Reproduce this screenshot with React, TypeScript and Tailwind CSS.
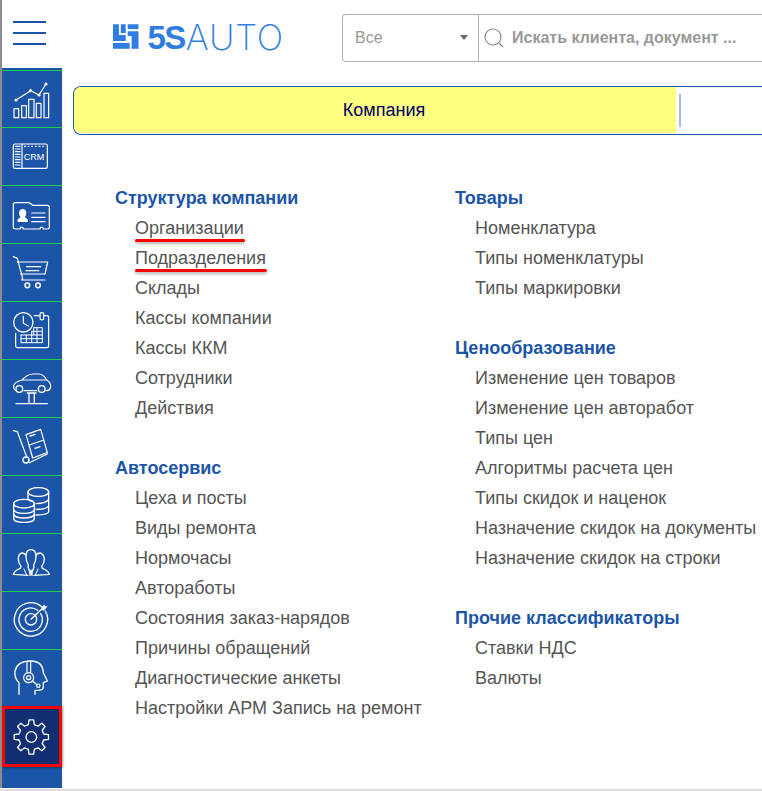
import React from "react";

function Ic({ top, h = 57, children }: { top: number; h?: number; children: React.ReactNode }) {
  return (
    <svg
      width={60}
      height={h}
      viewBox={`6 ${top + 3} 180 ${h * 3}`}
      fill="none"
      stroke="#fff"
      strokeWidth={3.6}
      strokeLinecap="round"
      strokeLinejoin="round"
    >
      {children}
    </svg>
  );
}

const icons: React.ReactNode[] = [
  <Ic key="chart" top={30} h={56}>
    <path d="M48 120 L92 92 L117 105 L138 72" />
    <circle cx="48" cy="120" r="3" fill="#fff" />
    <circle cx="92" cy="92" r="3" fill="#fff" />
    <circle cx="117" cy="105" r="3" fill="#fff" />
    <circle cx="138" cy="72" r="3" fill="#fff" />
    <rect x="42" y="146" width="14" height="27" />
    <rect x="65" y="137" width="14" height="36" />
    <rect x="86" y="118" width="16" height="55" />
    <rect x="109" y="130" width="14" height="43" />
    <rect x="132" y="100" width="14" height="73" />
  </Ic>,
  <Ic key="crm" top={201}>
    <rect x="40" y="252" width="102" height="73" rx="5" />
    <path d="M66 252 V325" />
    <path d="M46 259 H60 M46 267 H60 M46 275 H60 M46 283 H60 M46 291 H60 M46 299 H60 M46 307 H60 M46 315 H60" />
    <path d="M72 259 H138" strokeDasharray="5 6" strokeLinecap="butt" />
    <text x="71" y="299" fill="#fff" stroke="none" fontSize="27" fontFamily="'Liberation Sans', sans-serif">CRM</text>
  </Ic>,
  <Ic key="card" top={375}>
    <path d="M40 434 Q40 428 46 428 H88 L98 436 H142 Q148 436 148 442 V502 Q148 507 142 507 H130 L128 502 H122 L120 507 H70 L68 502 H62 L60 507 H46 Q40 507 40 502 Z" />
    <path d="M54 484 Q54 476 64 473 Q58 466 59 458 Q60 449 68 449 Q76 449 77 458 Q78 466 72 473 Q82 476 82 484 Z" fill="#fff" />
    <path d="M95 459 H135 M95 472 H135 M95 485 H135" />
  </Ic>,
  <Ic key="cart" top={549}>
    <path d="M40 590 L52 595 L68 655 L65 660 H135" />
    <path d="M52 606 H143 L135 642 H62" />
    <path d="M80 620 H122 M78 632 H116" />
    <circle cx="82" cy="676" r="7" strokeWidth="4.500" />
    <circle cx="114" cy="676" r="7" strokeWidth="4.500" />
  </Ic>,
  <Ic key="cal" top={3}>
    <path d="M103 47 H120 M132 47 H141 Q146 47 146 52 V138 Q146 143 141 143 H52 Q47 143 47 138 V100" />
    <rect x="120" y="38" width="11" height="22" rx="5" />
    <circle cx="70" cy="67" r="29" strokeWidth="4" />
    <path d="M70 48 V70 L85 78" />
    <path d="M63 105 H127 M63 128 H127 M63 128 V105 M127 128 V83 H103 M95 105 V128 M79 105 V128 M111 83 V128 M95 105 V96 M95 94 H127 M101 83 V105 M63 116 H127" strokeWidth="3" />
  </Ic>,
  <Ic key="lift" top={177}>
    <path d="M48 272 Q40 268 41 256 Q43 247 66 240 Q82 222 100 222 H118 Q132 224 140 240 Q153 248 152 260 Q151 272 138 272 M72 272 H110 M66 240 H140" />
    <circle cx="58" cy="267" r="10" strokeWidth="4" />
    <circle cx="125" cy="267" r="10" strokeWidth="4" />
    <path d="M82 279 H108 M87 279 V310 M103 279 V310" strokeWidth="4" />
    <path d="M48 311 H142" strokeWidth="4" />
  </Ic>,
  <Ic key="dolly" top={351}>
    <path d="M40 392 L52 395 L80 470" />
    <path d="M78 404 L122 388 L142 458 L98 474 Z M88 435 L132 420" />
    <path d="M90 408 L105 403 M105 445 L120 440" strokeWidth="4" />
    <path d="M88 488 L142 462" />
    <circle cx="78" cy="480" r="9" strokeWidth="4" />
  </Ic>,
  <Ic key="coins" top={525}>
    <ellipse cx="115" cy="576" rx="31" ry="13" strokeWidth="4" />
    <path d="M84 576 V598 M146 576 V635 Q146 644 108 645 M146 598 Q140 610 108 611 M84 598 Q90 604 100 604 M146 618 Q140 628 108 628" strokeWidth="4" />
    <ellipse cx="72" cy="611" rx="31" ry="13" strokeWidth="4" />
    <path d="M41 611 V655 Q42 667 72 667 Q102 667 103 655 V611 M41 628 Q44 640 72 640 Q100 640 103 628 M41 642 Q44 654 72 654 Q100 654 103 642" strokeWidth="4" />
  </Ic>,
  <Ic key="people" top={-24}>
    <path d="M93 26 Q78 26 78 46 Q78 60 85 72 L84 78 L93 103 L102 78 L101 72 Q108 60 108 46 Q108 26 93 26 Z" strokeWidth="4" />
    <path d="M78 42 Q72 36 66 36 Q55 38 55 54 Q55 66 63 76 L61 82 Q44 88 40 100 L84 103 M108 42 Q114 36 120 36 Q131 38 133 54 Q133 66 125 76 L127 82 Q144 88 148 100 L102 103" strokeWidth="4" />
    <path d="M72 84 L80 102 M114 84 L106 102 M89 103 L93 86 L97 103" strokeWidth="3" />
  </Ic>,
  <Ic key="target" top={150}>
    <path d="M125 197 A50 50 0 1 0 136 210" strokeWidth="4" />
    <path d="M113 208 A35 35 0 1 0 122 218" strokeWidth="4" />
    <circle cx="93" cy="235" r="17" strokeWidth="4" />
    <path d="M93 235 L128 202" strokeWidth="4" />
    <path d="M124 200 L133 192 L134 198 L141 196 L132 208 L127 206" fill="#fff" strokeWidth="2" />
  </Ic>,
  <Ic key="head" top={324}>
    <path d="M57 460 V425 Q42 410 45 390 Q52 360 92 360 Q128 360 130 395 L142 420 L130 425 V440 Q128 450 105 448 V460" strokeWidth="4" />
    <path d="M81 362 V395 M92 361 V395" />
    <circle cx="86" cy="410" r="15" />
    <circle cx="86" cy="410" r="6" />
    <path d="M97 420 L111 431" />
    <circle cx="115" cy="434" r="5" />
  </Ic>,
];

function gearPath(cx: number, cy: number, ro: number, ri: number, n: number) {
  const pts: string[] = [];
  const step = (Math.PI * 2) / n;
  for (let i = 0; i < n; i++) {
    const a = -Math.PI / 2 + i * step;
    const p = (r: number, d: number) => `${(cx + r * Math.cos(a + d)).toFixed(1)} ${(cy + r * Math.sin(a + d)).toFixed(1)}`;
    pts.push(`${i === 0 ? "M" : "L"}${p(ri, -step * 0.3)}`, `L${p(ro, -step * 0.17)}`, `L${p(ro, step * 0.17)}`, `L${p(ri, step * 0.3)}`);
  }
  return pts.join(" ") + " Z";
}

const Gear = () => (
  <svg width={54} height={54} viewBox="14 504 162 162" fill="none" stroke="#fff" strokeWidth={4} strokeLinejoin="round">
    <path d={gearPath(93, 588, 52, 38, 8)} />
    <circle cx="93" cy="588" r="16" />
  </svg>
);

const Logo = () => (
  <svg width="27" height="27" viewBox="0 0 27 27" fill="#2f7de1">
    <path d="M0 0 H6 V11 H13 V17 H0 Z" />
    <path d="M8 0 H13 V9 H8 Z" />
    <path d="M15 0 H26 V5 H15 Z" />
    <path d="M15 7 H26 V25 H19 V12 H15 Z" />
    <path d="M0 19 H17 V25 H0 Z" />
  </svg>
);

type Sec = { t: string; items: string[]; u?: string[] };

const col1: Sec[] = [
  {
    t: "Структура компании",
    items: ["Организации", "Подразделения", "Склады", "Кассы компании", "Кассы ККМ", "Сотрудники", "Действия"],
    u: ["Организации", "Подразделения"],
  },
  {
    t: "Автосервис",
    items: ["Цеха и посты", "Виды ремонта", "Нормочасы", "Автоработы", "Состояния заказ-нарядов", "Причины обращений", "Диагностические анкеты", "Настройки АРМ Запись на ремонт"],
  },
];
const col2: Sec[] = [
  { t: "Товары", items: ["Номенклатура", "Типы номенклатуры", "Типы маркировки"] },
  {
    t: "Ценообразование",
    items: ["Изменение цен товаров", "Изменение цен авторабот", "Типы цен", "Алгоритмы расчета цен", "Типы скидок и наценок", "Назначение скидок на документы", "Назначение скидок на строки"],
  },
  { t: "Прочие классификаторы", items: ["Ставки НДС", "Валюты"] },
];

function Column({ secs, className }: { secs: Sec[]; className: string }) {
  return (
    <div className={`flex flex-col gap-[30px] ${className}`}>
      {secs.map((s) => (
        <div key={s.t}>
          <div className="h-[30px] text-[18px] leading-[30px] font-bold whitespace-nowrap text-[#1c55a8]">{s.t}</div>
          {s.items.map((i) => (
            <div key={i} className="relative h-[30px] pl-5 text-[18px] leading-[30px] whitespace-nowrap text-[#555555]">
              <span className="relative inline-block">
                {i}
                {s.u?.includes(i) && (
                  <span className="absolute top-[26px] right-[-1px] left-0 h-[3px] rounded-sm bg-[#ff0000] shadow-[0_2px_3px_rgba(0,0,0,0.3)]" />
                )}
              </span>
            </div>
          ))}
        </div>
      ))}
    </div>
  );
}

export default function App() {
  return (
    <div className="flex h-[791px] w-[762px] overflow-hidden border-b-2 border-[#dddddd] bg-white font-['Liberation_Sans',Arial,sans-serif]">
      <div className="flex h-[788px] w-[62px] shrink-0 flex-col border-l-2 border-[#8c8c8c]">
        <div className="flex h-[68px] shrink-0 flex-col justify-center gap-[9px] pb-[2px] pl-[11px]">
          <div className="h-[2px] w-[33px] bg-[#1c55a8]" />
          <div className="h-[2px] w-[33px] bg-[#1c55a8]" />
          <div className="h-[2px] w-[33px] bg-[#1c55a8]" />
        </div>
        <div className="flex flex-1 flex-col bg-[#1c55a8] pt-[2px]">
          {icons.map((ic, i) => (
            <div key={i} className={`shrink-0 border-t border-[#1fd14a] ${i === 0 ? "h-[57px]" : "h-[58px]"}`}>
              {ic}
            </div>
          ))}
          <div className="mt-[-1px] h-[61px] shrink-0 border-[3px] border-[#ff0000] bg-[#112f72] shadow-[1px_1px_2px_rgba(0,0,0,0.4)]">
            <Gear />
          </div>
        </div>
      </div>
      <div className="min-w-0 flex-1">
        <div className="flex h-[75px] items-center">
          <div className="ml-[51px] flex h-[29px] w-[171px] shrink-0 items-center">
            <Logo />
            <span className="ml-[8px] text-[33px] leading-none font-bold tracking-[-1.5px] text-[#2f7de1]">5S</span>
            <span className="ml-[1px] font-['Inter',sans-serif] text-[35px] leading-none font-extralight tracking-[0.8px] text-[#2f7de1]">AUTO</span>
          </div>
          <div className="ml-[58px] flex h-[48px] w-[500px] shrink-0 rounded-l-[4px] border border-r-0 border-[#b3b3b3]">
            <div className="flex w-[136px] shrink-0 items-center justify-between border-r border-[#b3b3b3] pr-[10px] pl-[12px] text-[16px] text-[#999999]">
              <span>Все</span>
              <span className="h-0 w-0 border-x-[4px] border-t-[5px] border-x-transparent border-t-[#666666]" />
            </div>
            <div className="flex items-center pl-[4px]">
              <svg width="22" height="22" viewBox="0 0 22 22" fill="none" stroke="#8a8a8a" strokeWidth="1.200">
                <circle cx="10" cy="10" r="8" />
                <path d="M16 16 L20 20" />
              </svg>
              <span className="ml-[7px] text-[16px] font-bold whitespace-nowrap text-[#999999]">Искать клиента, документ ...</span>
            </div>
          </div>
        </div>
        <div className="mt-[11px] ml-[11px] flex h-[49px] w-[700px] rounded-l-[8px] border-y border-l border-[#1c55a8]">
          <div className="mb-[1px] flex w-[602px] shrink-0 items-center justify-center rounded-l-[7px] bg-[#ffff80] pt-[1px] pl-[18px] text-[18px] text-[#000066]">Компания</div>
          <div className="my-[7px] ml-[3px] w-[2px] bg-[#a6bfe0]" />
        </div>
        <div className="mt-[48px] ml-[53px] flex">
          <Column secs={col1} className="w-[340px] shrink-0" />
          <Column secs={col2} className="shrink-0" />
        </div>
      </div>
    </div>
  );
}
